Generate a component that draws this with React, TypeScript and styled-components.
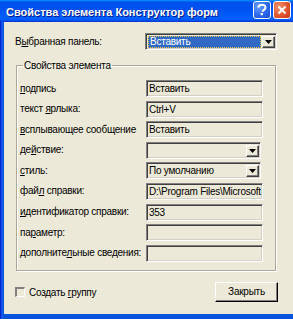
import { Fragment } from 'react';
import styled, { createGlobalStyle } from 'styled-components';

const Global = createGlobalStyle`
  html, body {
    margin: 0;
    padding: 0;
    width: 293px;
    height: 319px;
    overflow: hidden;
    background: #ece9d8;
  }
  body {
    font-family: "Liberation Sans", Arial, sans-serif;
    font-size: 10px;
    letter-spacing: -0.25px;
    color: #000;
  }
`;

const Window = styled.div`
  width: 293px;
  height: 319px;
  display: flex;
  flex-direction: column;
  background: linear-gradient(to right, #0019cf 0, #0831d9 1px, #166aee 2px, #0855dd 3px, #0855dd 100%);
`;

const TitleBar = styled.div`
  height: 22px;
  flex: none;
  display: flex;
  align-items: center;
  padding: 0 2px 0 6px;
  background: linear-gradient(
    to bottom,
    #0997ff 0,
    #0053ee 2px,
    #0050ee 8px,
    #0060ff 18px,
    #005bff 20px,
    #003dd7 21px,
    #003dd7 22px
  );
`;

const Title = styled.div`
  flex: 1;
  color: #fff;
  font-weight: bold;
  font-size: 11px;
  letter-spacing: 0;
  white-space: nowrap;
  text-shadow: 1px 1px 0 #0a1883;
  padding-top: 1px;
`;

const CaptionButtons = styled.div`
  display: flex;
  gap: 2px;
  align-self: flex-start;
  margin-top: 1px;
`;

const CapButton = styled.div<{ $kind: 'help' | 'close' }>`
  width: 18px;
  height: 18px;
  box-sizing: border-box;
  border: 1px solid #fff;
  border-radius: 3px;
  display: flex;
  align-items: center;
  justify-content: center;
  background: ${(p) =>
    p.$kind === 'close'
      ? 'radial-gradient(circle at 30% 30%, #f09070 0, #e0562e 55%, #c1391a 100%)'
      : 'radial-gradient(circle at 30% 30%, #6aa0ff 0, #2c68ec 55%, #1a4ccf 100%)'};
`;

const Client = styled.div`
  flex: 1;
  margin: 0 0 5px 4px;
  background: #ece9d8;
  padding: 11px 0 0 11px;
  display: flex;
  flex-direction: column;
`;

const TopRow = styled.div`
  display: flex;
  align-items: center;
  height: 17px;
`;

const RowLabel = styled.div<{ $w: number }>`
  width: ${(p) => p.$w}px;
  flex: none;
  white-space: nowrap;
  line-height: 12px;
`;

const Sunken = styled.div<{ $w: number }>`
  width: ${(p) => p.$w}px;
  height: 17px;
  box-sizing: border-box;
  border-top: 1px solid #808080;
  border-left: 1px solid #808080;
  border-right: 1px solid #fff;
  border-bottom: 1px solid #fff;
  box-shadow: inset 1px 1px 0 #404040, inset -1px -1px 0 #d4d0c8;
  display: flex;
  align-items: stretch;
  overflow: hidden;
  white-space: nowrap;
`;

const FieldText = styled.div<{ $selected?: boolean }>`
  flex: 1;
  min-width: 0;
  overflow: hidden;
  padding: 0 0 0 2px;
  margin: ${(p) => (p.$selected ? '2px 1px 1px 2px' : '0')};
  line-height: ${(p) => (p.$selected ? '12px' : '15px')};
  color: ${(p) => (p.$selected ? '#fff' : '#000')};
  background: ${(p) => (p.$selected ? '#316ac5' : 'transparent')};
  outline: ${(p) => (p.$selected ? '1px dotted #f0c040' : 'none')};
  outline-offset: -1px;
`;

const DropButton = styled.div`
  width: 13px;
  flex: none;
  margin: 2px 1px 1px 0;
  box-sizing: border-box;
  background: #ece9d8;
  border-top: 1px solid #fff;
  border-left: 1px solid #fff;
  border-right: 1px solid #404040;
  border-bottom: 1px solid #404040;
  box-shadow: inset -1px -1px 0 #808080;
  display: flex;
  align-items: center;
  justify-content: center;
`;

const GroupBox = styled.fieldset`
  margin: 9px 0 0 1px;
  width: 260px;
  box-sizing: border-box;
  border: 1px solid #aca899;
  box-shadow: 1px 1px 0 #fff, inset 1px 1px 0 #fff;
  padding: 8px 0 8px 3px;
  min-width: 0;
`;

const Legend = styled.legend`
  margin-left: 3px;
  padding: 0 1px;
  line-height: 13px;
`;

const FieldGrid = styled.div`
  display: grid;
  grid-template-columns: 126px 117px;
  grid-auto-rows: 17px;
  row-gap: 3.6px;
  align-items: center;
`;

const GridLabel = styled.div`
  white-space: nowrap;
  line-height: 12px;
`;

const BottomRow = styled.div`
  display: flex;
  align-items: center;
  justify-content: space-between;
  width: 263px;
  margin-top: 11px;
`;

const CheckLabel = styled.div`
  display: flex;
  align-items: center;
  gap: 4px;
  margin-top: 1px;
`;

const CheckBox = styled.div`
  width: 10px;
  height: 10px;
  box-sizing: border-box;
  border-top: 2px solid #808080;
  border-left: 2px solid #808080;
  border-right: 1px solid #fff;
  border-bottom: 1px solid #fff;
`;

const PushButton = styled.div`
  width: 63px;
  height: 20px;
  box-sizing: border-box;
  border-top: 1px solid #fff;
  border-left: 1px solid #fff;
  border-right: 1px solid #000;
  border-bottom: 1px solid #000;
  box-shadow: inset -1px -1px 0 #808080;
  display: flex;
  align-items: center;
  justify-content: center;
  line-height: 12px;
`;

const Arrow = () => (
  <svg width="7" height="4" viewBox="0 0 7 4">
    <path d="M0 0h7L3.5 4z" fill="#000" />
  </svg>
);

type Row = {
  label: React.ReactNode;
  value?: string;
  combo?: boolean;
};

const rows: Row[] = [
  { label: <><u>п</u>одпись</>, value: 'Вставить' },
  { label: <>текст <u>я</u>рлыка:</>, value: 'Ctrl+V' },
  { label: <><u>в</u>сплывающее сообщение</>, value: 'Вставить' },
  { label: <>де<u>й</u>ствие:</>, combo: true, value: '' },
  { label: <><u>с</u>тиль:</>, combo: true, value: 'По умолчанию' },
  { label: <>фай<u>л</u> справки:</>, value: 'D:\\Program Files\\Microsoft Office' },
  { label: <><u>и</u>дентификатор справки:</>, value: '353' },
  { label: <>па<u>р</u>аметр:</>, value: '' },
  { label: <>дополните<u>л</u>ьные сведения:</>, value: '' },
];

export default function App() {
  return (
    <>
      <Global />
      <Window>
        <TitleBar>
          <Title>Свойства элемента Конструктор форм</Title>
          <CaptionButtons>
            <CapButton $kind="help">
              <svg width="10" height="12" viewBox="0 0 10 12">
                <path
                  d="M1.5 3.5C1.5 1.8 3 0.8 5 0.8s3.5 1 3.5 2.7c0 1.5-1.2 2-2 2.6-.6.4-.8.8-.8 1.6"
                  fill="none"
                  stroke="#fff"
                  strokeWidth="2"
                />
                <rect x="3.7" y="9" width="2.2" height="2.2" fill="#fff" />
              </svg>
            </CapButton>
            <CapButton $kind="close">
              <svg width="10" height="10" viewBox="0 0 10 10">
                <path d="M1.5 1.5l7 7M8.5 1.5l-7 7" stroke="#fff" strokeWidth="2" />
              </svg>
            </CapButton>
          </CaptionButtons>
        </TitleBar>
        <Client>
          <TopRow>
            <RowLabel $w={130}>
              В<u>ы</u>бранная панель:
            </RowLabel>
            <Sunken $w={132}>
              <FieldText $selected>Вставить</FieldText>
              <DropButton>
                <Arrow />
              </DropButton>
            </Sunken>
          </TopRow>
          <GroupBox>
            <Legend>Свойства элемента</Legend>
            <FieldGrid>
              {rows.map((r, i) => (
                <Fragment key={i}>
                  <GridLabel>{r.label}</GridLabel>
                  <Sunken $w={r.combo ? 115 : 117}>
                    <FieldText>{r.value}</FieldText>
                    {r.combo && (
                      <DropButton>
                        <Arrow />
                      </DropButton>
                    )}
                  </Sunken>
                </Fragment>
              ))}
            </FieldGrid>
          </GroupBox>
          <BottomRow>
            <CheckLabel>
              <CheckBox />
              <span>
                Создать <u>г</u>руппу
              </span>
            </CheckLabel>
            <PushButton>Закрыть</PushButton>
          </BottomRow>
        </Client>
      </Window>
    </>
  );
}
